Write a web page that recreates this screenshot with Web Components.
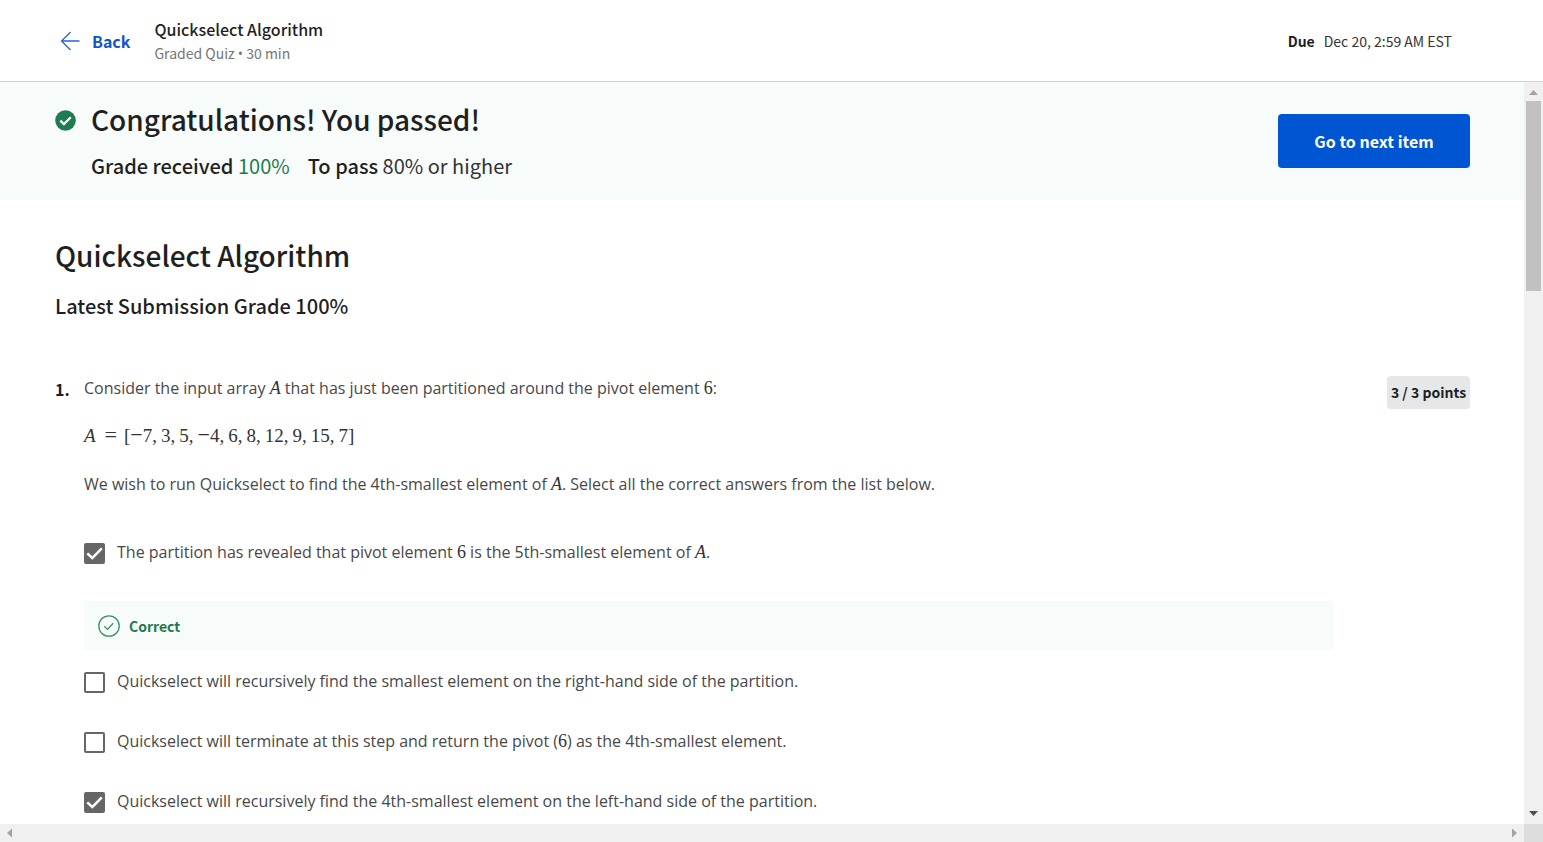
<!DOCTYPE html>
<html lang="en">
<head>
<meta charset="utf-8">
<meta name="viewport" content="width=device-width, initial-scale=1">
<title>Quickselect Algorithm</title>
<style>
html, body { margin: 0; height: 100%; }
body {
  --ui: "Noto Sans CJK SC", "Noto Sans", sans-serif;
  --ink: #1f1f1f;
  --green: #1f7a4f;
  --mint: #f7fbf9;
  font-family: "Open Sans", "Noto Sans", sans-serif;
  font-size: 16px;
  line-height: 24px;
  color: #484848;
  background: #fff;
}
</style>
</head>
<body>
<quiz-page></quiz-page>
<script>
function define(name, html) {
  const t = document.createElement('template');
  t.innerHTML = html.trim();
  customElements.define(name, class extends HTMLElement {
    constructor() {
      super();
      this.attachShadow({ mode: 'open' }).append(t.content.cloneNode(true));
    }
    connectedCallback() {
      const box = this.shadowRoot.querySelector('input');
      if (box) box.checked = this.hasAttribute('checked');
    }
  });
}

define('quiz-header', `
<style>
:host { display: block; font-family: var(--ui); color: var(--ink); background: #fff; border-bottom: 1px solid #cfd5d3; }
header { display: flex; align-items: center; height: 81px; padding: 0 91px 0 60px; }
a { display: flex; align-items: center; gap: 12px; color: #0f56c8; font-weight: 700; font-size: 16px; line-height: 22px; text-decoration: none; margin-right: 24px; }
.t { flex: 1; }
h1 { margin: 0; font-size: 16px; line-height: 24px; font-weight: 500; }
p { margin: 0; font-size: 14px; line-height: 24px; color: #757575; }
.dot { font-family: "Open Sans", sans-serif; line-height: 1px; }
.due { font-size: 14px; color: #333; display: flex; gap: 9px; }
b { color: var(--ink); }
</style>
<header>
  <a href="#"><svg width="20" height="20" viewBox="0 0 20 20" fill="none" stroke="#2a66cc" stroke-width="1.3"><path d="M19.5 10H1.5M10.5 1L1.5 10l9 9"/></svg>Back</a>
  <div class="t"><h1>Quickselect Algorithm</h1><p>Graded Quiz <span class="dot">•</span> 30 min</p></div>
  <div class="due"><b>Due</b><span>Dec 20, 2:59 AM EST</span></div>
</header>`);

define('pass-banner', `
<style>
:host { display: block; background: var(--mint); font-family: var(--ui); color: var(--ink); }
section { display: flex; align-items: center; justify-content: space-between; height: 118px; padding: 0 54px 0 55px; }
.m { display: grid; grid-template-columns: 21px auto; column-gap: 15px; row-gap: 12px; align-items: center; }
.m svg { margin-top: 2px; }
h2 { margin: 0; font-size: 28px; line-height: 38px; font-weight: 500; }
p { grid-column: 2; margin: 0; font-size: 20px; line-height: 32px; display: flex; gap: 18px; color: #333; }
b { font-weight: 500; color: var(--ink); }
.g { color: var(--green); }
button { font: 700 16px/24px var(--ui); color: #fff; background: #0056d2; border: 0; border-radius: 4px; height: 54px; min-width: 192px; padding: 0 24px; }
</style>
<section>
  <div class="m">
    <svg width="21" height="21" viewBox="0 0 21 21"><circle cx="10.500" cy="10.500" r="10.300" fill="#1d7c50"/><path d="M5.300 10.600l3.600 3.500 6.900-6.900" fill="none" stroke="#fff" stroke-width="2.200"/></svg>
    <h2>Congratulations! You passed!</h2>
    <p><span><b>Grade received</b> <span class="g">100%</span></span><span><b>To pass</b> 80% or higher</span></p>
  </div>
  <button type="button">Go to next item</button>
</section>`);

define('math-text', `
<style>
:host { font-family: "Liberation Serif", serif; font-size: 18px; line-height: 1px; color: #333; }
:host([italic]) { font-style: italic; }
</style><slot></slot>`);

define('answer-option', `
<style>
:host { display: block; }
label { display: flex; align-items: center; gap: 12px; min-height: 24px; }
.c { display: grid; width: 21px; height: 21px; margin-top: 2px; }
.c > * { grid-area: 1 / 1; margin: 0; }
input { appearance: none; box-sizing: border-box; width: 21px; height: 21px; border: 2px solid #666; border-radius: 2px; }
input:checked { background: #666; }
svg { pointer-events: none; visibility: hidden; }
input:checked + svg { visibility: visible; }
</style>
<label><span class="c"><input type="checkbox"><svg width="21" height="21" viewBox="0 0 21 21"><path d="M3.300 10.300l5 4.700L17.800 5.300" fill="none" stroke="#fff" stroke-width="2.500"/></svg></span><span><slot></slot></span></label>`);

define('answer-feedback', `
<style>
:host { display: flex; align-items: center; gap: 9px; height: 49px; padding-left: 14px; background: var(--mint); color: var(--green); font: 700 14px/24px var(--ui); }
</style>
<svg width="22" height="22" viewBox="0 0 22 22" fill="none" stroke="#3a9068" stroke-width="1.300"><circle cx="11" cy="11" r="10.200"/><path d="M6.300 11.300l3.200 3.100 5.700-6.200"/></svg><slot></slot>`);

define('quiz-question', `
<style>
:host { display: grid; grid-template-columns: 29px minmax(0, 1fr) 83px; align-items: start; }
.n { font: 700 16px/26px var(--ui); color: var(--ink); }
.body { margin-right: 53px; }
p { margin: 0 0 24px; }
.arr { font-family: "Liberation Serif", serif; font-size: 19px; display: flex; align-items: baseline; color: #333; }
.arr span { margin-right: 4px; }
.arr b { font-size: 22px; line-height: 1px; font-weight: 400; }
.arr .eq { margin: 0 7px 0 9px; }
.badge { font: 700 14px/33px var(--ui); color: var(--ink); background: #e5e7e8; border-radius: 4px; text-align: center; white-space: nowrap; }
.answers { display: grid; margin-top: 44px; }
answer-option { margin-bottom: 36px; }
answer-feedback { margin: 1px 0 19px; }
</style>
<div class="n">1.</div>
<div class="body">
  <p>Consider the input array <math-text italic>A</math-text> that has just been partitioned around the pivot element <math-text>6</math-text>:</p>
  <p class="arr"><i>A</i><b class="eq">=</b>[<span><b>−</b>7,</span><span>3,</span><span>5,</span><span><b>−</b>4,</span><span>6,</span><span>8,</span><span>12,</span><span>9,</span><span>15,</span>7]</p>
  <p>We wish to run Quickselect to find the 4th-smallest element of <math-text italic>A</math-text>. Select all the correct answers from the list below.</p>
  <div class="answers">
    <answer-option checked>The partition has revealed that pivot element <math-text>6</math-text> is the 5th-smallest element of <math-text italic>A</math-text>.</answer-option>
    <answer-feedback>Correct</answer-feedback>
    <answer-option>Quickselect will recursively find the smallest element on the right-hand side of the partition.</answer-option>
    <answer-option>Quickselect will terminate at this step and return the pivot (<math-text>6</math-text>) as the 4th-smallest element.</answer-option>
    <answer-option checked>Quickselect will recursively find the 4th-smallest element on the left-hand side of the partition.</answer-option>
  </div>
</div>
<div class="badge">3 / 3 points</div>`);

define('scroll-bar', `
<style>
:host { display: flex; flex-direction: column; background: #f0f0f0; }
:host([horizontal]) { flex-direction: row; justify-content: space-between; }
svg { flex: none; width: 19px; height: 19px; }
:host([horizontal]) svg { height: 18px; }
.r { flex: 1; padding: 0 2px; }
.r div { height: 27%; background: #c1c1c1; }
:host([horizontal]) .r, .h { display: none; }
:host([horizontal]) .v { display: none; }
:host([horizontal]) .h { display: block; }
</style>
<svg class="v" viewBox="0 0 19 19"><path d="M5 13l4.500-5 4.500 5z" fill="#a3a3a3"/></svg>
<div class="r"><div></div></div>
<svg class="v" viewBox="0 0 19 19"><path d="M5 6l4.500 5 4.500-5z" fill="#505050"/></svg>
<svg class="h" viewBox="0 0 19 18"><path d="M12 4.500L7 9l5 4.500z" fill="#a3a3a3"/></svg>
<svg class="h" viewBox="0 0 19 18"><path d="M7 4.500L12 9l-5 4.500z" fill="#a3a3a3"/></svg>`);

define('quiz-page', `
<style>
:host { display: flex; flex-direction: column; height: 100vh; overflow: hidden; }
.frame { flex: 1; min-height: 0; display: grid; grid-template: minmax(0, 1fr) 18px / minmax(0, 1fr) 19px; }
main { overflow: hidden; }
.corner { background: #dcdcdc; }
.content { padding: 36px 54px 0 55px; }
h2, h3 { margin: 0; font-family: var(--ui); color: var(--ink); font-weight: 500; }
h2 { font-size: 28px; line-height: 38px; }
h3 { font-size: 20px; line-height: 32px; margin: 16px 0 54px; }
</style>
<quiz-header></quiz-header>
<div class="frame">
  <main>
    <pass-banner></pass-banner>
    <div class="content">
      <h2>Quickselect Algorithm</h2>
      <h3>Latest Submission Grade 100%</h3>
      <quiz-question></quiz-question>
    </div>
  </main>
  <scroll-bar></scroll-bar>
  <scroll-bar horizontal></scroll-bar>
  <div class="corner"></div>
</div>`);
</script>
</body>
</html>
